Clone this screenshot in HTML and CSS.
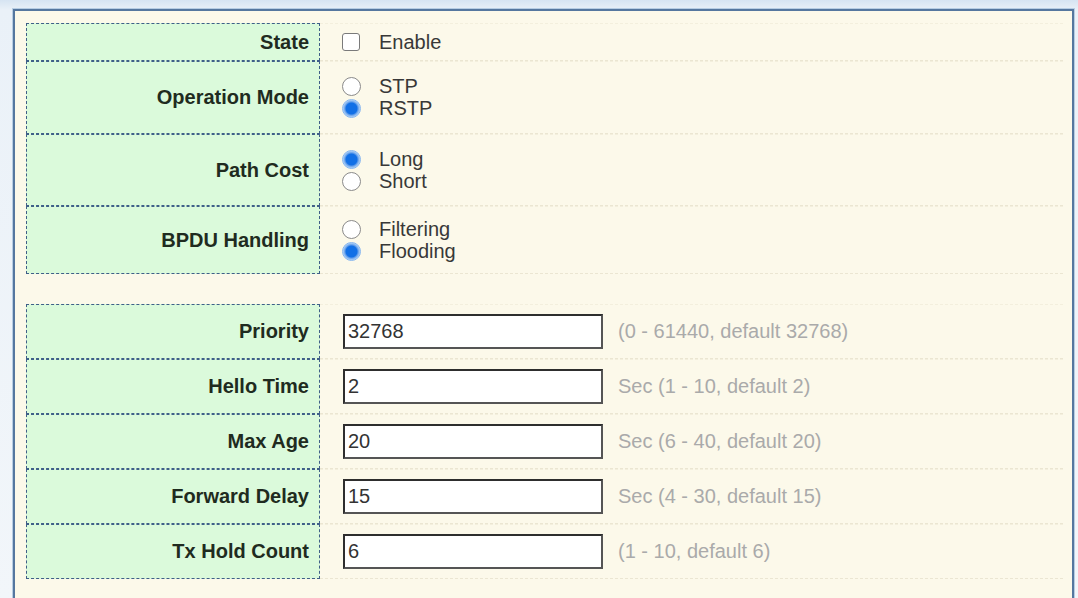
FILE: index.html
```html
<!DOCTYPE html>
<html>
<head>
<meta charset="utf-8">
<link rel="stylesheet" href="styles.css">
</head>
<body>
<div class="frame">
  <div class="section">
    <div class="row row-state">
      <div class="label">State</div>
      <div class="value">
        <div class="opt"><span class="check"></span><span>Enable</span></div>
      </div>
    </div>
    <div class="row row-pair">
      <div class="label">Operation Mode</div>
      <div class="value">
        <div class="opt"><span class="radio"></span><span>STP</span></div>
        <div class="opt"><span class="radio on"></span><span>RSTP</span></div>
      </div>
    </div>
    <div class="row row-pair">
      <div class="label">Path Cost</div>
      <div class="value">
        <div class="opt"><span class="radio on"></span><span>Long</span></div>
        <div class="opt"><span class="radio"></span><span>Short</span></div>
      </div>
    </div>
    <div class="row row-pair-last">
      <div class="label">BPDU Handling</div>
      <div class="value">
        <div class="opt"><span class="radio"></span><span>Filtering</span></div>
        <div class="opt"><span class="radio on"></span><span>Flooding</span></div>
      </div>
    </div>
  </div>
  <div class="section section-b">
    <div class="row row-field">
      <div class="label">Priority</div>
      <div class="value value-field"><div class="input">32768</div><span class="hint">(0 - 61440, default 32768)</span></div>
    </div>
    <div class="row row-field">
      <div class="label">Hello Time</div>
      <div class="value value-field"><div class="input">2</div><span class="hint">Sec (1 - 10, default 2)</span></div>
    </div>
    <div class="row row-field">
      <div class="label">Max Age</div>
      <div class="value value-field"><div class="input">20</div><span class="hint">Sec (6 - 40, default 20)</span></div>
    </div>
    <div class="row row-field">
      <div class="label">Forward Delay</div>
      <div class="value value-field"><div class="input">15</div><span class="hint">Sec (4 - 30, default 15)</span></div>
    </div>
    <div class="row row-field">
      <div class="label">Tx Hold Count</div>
      <div class="value value-field"><div class="input">6</div><span class="hint">(1 - 10, default 6)</span></div>
    </div>
  </div>
</div>
</body>
</html>
```

FILE: styles.css
```css
html, body {
  margin: 0;
  padding: 0;
  height: 100%;
}
body {
  background: linear-gradient(#d6e4f2 0, #eaf1f8 10px, #f2f6fa 100%);
  font-family: "Liberation Sans", Arial, sans-serif;
  font-size: 20px;
  color: #333;
  overflow: hidden;
}
.frame {
  margin: 9px 4px 0 13px;
  height: calc(100% - 9px);
  box-sizing: border-box;
  border: 2px solid #55779f;
  border-bottom: none;
  box-shadow: 0 0 0 1px #b7cde3;
  background: #fcf9ea;
  padding: 12px 9px 0 11px;
}
.section-b {
  margin-top: 30px;
}
.row {
  display: flex;
  box-sizing: border-box;
}
.row-state { height: 38px; }
.row-pair { height: 73px; }
.row-pair:nth-child(3) { height: 72px; }
.row-pair-last { height: 68px; }
.row-field { height: 55px; }
.label {
  width: 294px;
  flex: none;
  box-sizing: border-box;
  border: 1px dashed #3f5f88;
  background: #dbfadb;
  font-weight: bold;
  color: #1f2b20;
  display: flex;
  align-items: center;
  justify-content: flex-end;
  padding-right: 10px;
}
.value {
  flex: 1;
  display: flex;
  flex-direction: column;
  justify-content: center;
  padding-left: 22px;
  border-bottom: 1px dashed #ebe6d2;
  border-top: 1px dashed #f3efdd;
}
.opt {
  display: flex;
  align-items: center;
  height: 22px;
  color: #383838;
}
.check {
  width: 16px;
  height: 16px;
  border: 1px solid #7a7a7a;
  border-radius: 3px;
  background: #fff;
  margin-right: 19px;
  flex: none;
}
.radio {
  width: 17px;
  height: 17px;
  border: 1px solid #8a8a8a;
  border-radius: 50%;
  background: #fff;
  margin-right: 18px;
  flex: none;
}
.radio.on {
  border-color: #86b6ef;
  background: radial-gradient(circle, #1270e6 0, #1270e6 5.5px, #5d9bea 6.5px, #b5d4f7 8.5px);
}
.value-field {
  flex-direction: row;
  align-items: center;
  justify-content: flex-start;
}
.input {
  width: 260px;
  height: 35px;
  box-sizing: border-box;
  border: 2px solid #2e2e2e;
  border-right-color: #555;
  border-bottom-color: #555;
  background: #fff;
  padding-left: 3px;
  display: flex;
  align-items: center;
  color: #333;
  flex: none;
  margin-left: 1px;
}
.hint {
  margin-left: 15px;
  color: #aaa;
}
```
